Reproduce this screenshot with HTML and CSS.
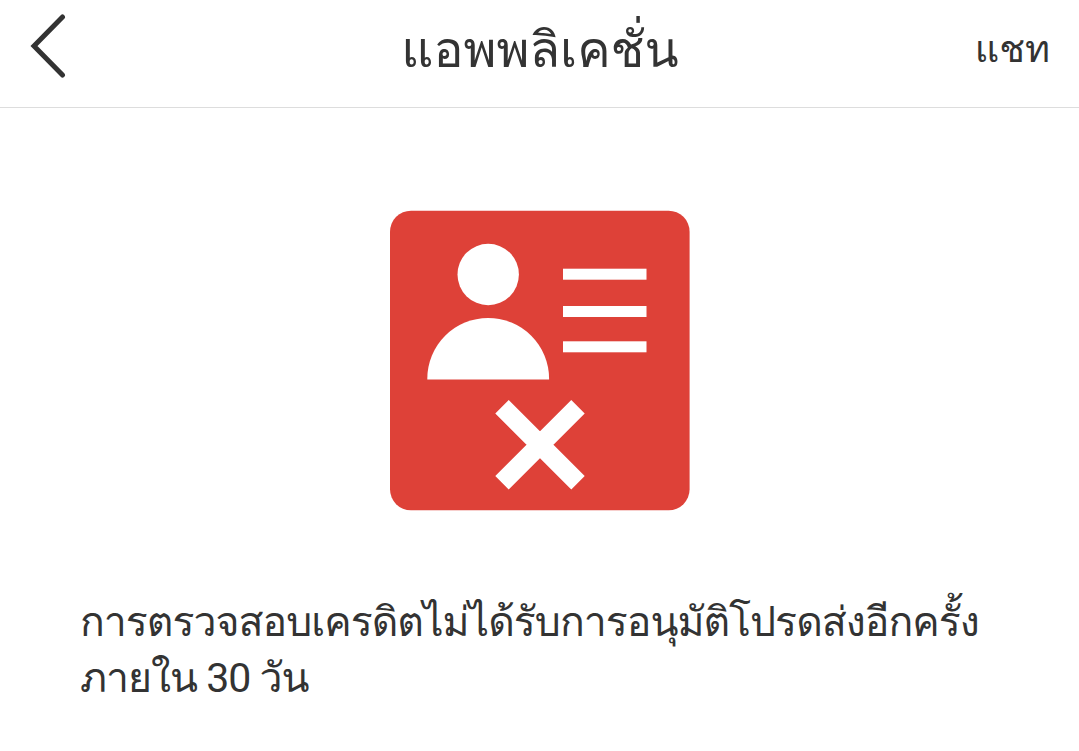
FILE: index.html
```html
<!DOCTYPE html>
<html lang="th">
<head>
  <meta charset="UTF-8" />
  <meta name="viewport" content="width=device-width, initial-scale=1.0" />
  <title>แอพพลิเคชั่น</title>
  <link rel="stylesheet" href="styles.css">
</head>
<body>
  <header class="header">
    <a class="back" href="#" aria-label="กลับ">
      <svg width="36" height="64" viewBox="0 0 36 64">
        <path d="M32.5 3 L4 32 L32.5 61" />
      </svg>
    </a>
    <h1 class="title">แอพพลิเคชั่น</h1>
    <a class="chat" href="#">แชท</a>
  </header>

  <main class="content">
    <svg class="status-icon" width="300" height="301" viewBox="0 0 300 301">
      <rect y="0.7" width="299.6" height="299.6" rx="21" fill="#de4138" />
      <g fill="#fff">
        <circle cx="98.2" cy="64.5" r="30.7" />
        <path d="M37.3 169.5 V168.8 A60.9 60.9 0 0 1 159.1 168.8 V169.5 Z" />
        <rect x="173" y="58.7" width="83.5" height="11" />
        <rect x="173" y="96" width="83.5" height="11" />
        <rect x="173" y="131.3" width="83.5" height="11" />
      </g>
      <path d="M112 196.8 L188 272.8 M188 196.8 L112 272.8" stroke="#fff" stroke-width="19" />
    </svg>
    <p class="message">การตรวจสอบเครดิตไม่ได้รับการอนุมัติโปรดส่งอีกครั้ง<br>ภายใน 30 วัน</p>
  </main>
</body>
</html>
```
FILE: styles.css
```css
* {
  box-sizing: border-box;
}
body {
  margin: 0;
  background: #fff;
  color: #333;
  font-family: Roboto, Loma, sans-serif;
}
.header {
  display: grid;
  grid-template-columns: 1fr auto 1fr;
  align-items: center;
  height: 108px;
  padding: 0 29px 15px 30px;
  border-bottom: 1px solid #ddd;
}
.back {
  display: flex;
}
.back path {
  fill: none;
  stroke: #333;
  stroke-width: 5;
  stroke-linecap: round;
}
.title {
  margin: 0;
  padding-top: 7px;
  font-size: 50px;
  font-weight: 400;
  line-height: 60px;
}
.chat {
  justify-self: end;
  padding-top: 6px;
  color: #333;
  font-size: 38px;
  line-height: 60px;
  text-decoration: none;
}
.content {
  padding: 102px 80px 0;
}
.status-icon {
  display: block;
  margin: 0 auto;
}
.message {
  margin: 83px 0 0;
  font-size: 41px;
  letter-spacing: -1px;
  line-height: 56px;
  white-space: nowrap;
}
```
